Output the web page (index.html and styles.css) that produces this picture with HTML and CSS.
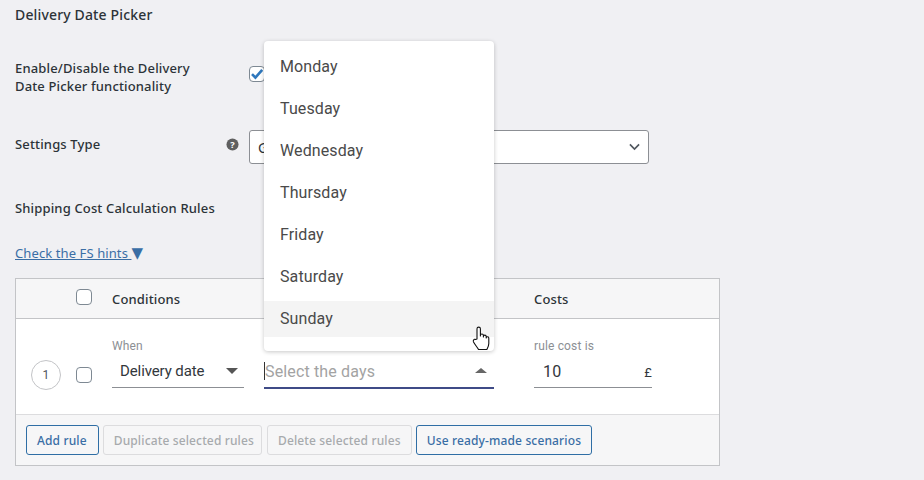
FILE: index.html
```html
<!DOCTYPE html>
<html lang="en">
<head>
<meta charset="utf-8">
<title>Delivery Date Picker</title>
<link rel="stylesheet" href="styles.css">
</head>
<body>
<main class="page">
  <h2 class="title">Delivery Date Picker</h2>
  <div class="field field-enable">
    <label class="field-label">Enable/Disable the Delivery Date Picker functionality</label>
    <span class="help-slot"></span>
    <span class="check check-on">
      <svg viewBox="0 0 16 16" width="16" height="16"><path d="M3 8.200l3.400 3.400L13.200 3.800" fill="none" stroke="#2f78bd" stroke-width="2.600"/></svg>
    </span>
  </div>
  <div class="field field-type">
    <label class="field-label">Settings Type</label>
    <span class="help-slot">
      <svg viewBox="0 0 14 14" width="13" height="13"><circle cx="7" cy="7" r="6.500" fill="#5f5f5f"/><text x="7" y="10.400" class="help-q">?</text></svg>
    </span>
    <div class="select-box">
      <span class="select-text">General</span>
      <svg viewBox="0 0 12 8" width="11" height="8"><path d="M1 1.200l5 5 5-5" fill="none" stroke="#50575e" stroke-width="1.800"/></svg>
    </div>
  </div>
  <h3 class="subtitle">Shipping Cost Calculation Rules</h3>
  <a class="hints" href="#">Check the FS hints <span class="hints-arrow">▼</span></a>
  <section class="rules">
    <div class="grid head">
      <span></span>
      <span class="check"></span>
      <span class="head-cell">Conditions</span>
      <span class="head-cell">Costs</span>
    </div>
    <div class="grid row">
      <span class="num">1</span>
      <span class="check"></span>
      <div class="ctrl">
        <span class="ctrl-label">When</span>
        <div class="ctrl-box">
          <span class="ctrl-value indent">Delivery date</span>
          <span class="tri tri-down"></span>
        </div>
      </div>
      <div class="ctrl ctrl-active">
        <div class="ctrl-box">
          <span class="caret"></span><span class="placeholder">Select the days</span>
          <span class="tri tri-up"></span>
        </div>
        <ul class="menu">
          <li>Monday</li>
          <li>Tuesday</li>
          <li>Wednesday</li>
          <li>Thursday</li>
          <li>Friday</li>
          <li>Saturday</li>
          <li class="hover">Sunday</li>
        </ul>
        <svg class="cursor" viewBox="0 0 18 25" width="18" height="25">
          <path d="M5 13V2.800a1.700 1.700 0 0 1 3.400 0V10V9.500a1.500 1.500 0 0 1 3 0V11V10.500a1.400 1.400 0 0 1 2.800 0V12a1.300 1.300 0 0 1 2.600 .2v5.300c0 2.500-1 4-2 6H6.500C5.500 21.500 3.500 19.500 1.500 16c-.8-1.500 .8-3.500 2-2.500z" fill="#fff" stroke="#111" stroke-width="1.100" stroke-linejoin="round"/>
        </svg>
      </div>
      <div class="ctrl ctrl-cost">
        <span class="ctrl-label">rule cost is</span>
        <div class="ctrl-box">
          <span class="ctrl-value cost-value">10</span>
          <span class="currency">£</span>
        </div>
      </div>
    </div>
    <div class="foot">
      <button class="btn btn-add">Add rule</button>
      <button class="btn btn-off">Duplicate selected rules</button>
      <button class="btn btn-off btn-del">Delete selected rules</button>
      <button class="btn">Use ready-made scenarios</button>
    </div>
  </section>
</main>
</body>
</html>
```
FILE: styles.css
```css
* { box-sizing: border-box; }
html, body { margin: 0; height: 480px; overflow: hidden; }
body { background: #f0f0f3; color: #2c3338; font-family: "Noto Sans", "Open Sans", sans-serif; font-size: 13px; letter-spacing: .15px; }
.page { padding: 5px 0 0 15px; width: 924px; }
.title { margin: 0; font-size: 14px; font-weight: 500; line-height: 20px; }
.field { display: flex; align-items: flex-start; }
.field-label { width: 202px; font-weight: 500; line-height: 18px; padding-right: 10px; }
.help-slot { width: 32px; display: flex; padding-left: 9px; }
.field-enable { margin-top: 34px; height: 36px; }
.field-enable .check { margin-top: 7px; }
.field-type { margin-top: 35px; height: 34px; }
.field-type .field-label { margin-top: 5px; }
.field-type .help-slot { margin-top: 8px; }
.help-q { fill: #fff; font: 700 10px "Noto Sans", sans-serif; text-anchor: middle; }
.check { display: block; width: 16px; height: 16px; border: 1px solid #7e8993; border-radius: 4px; background: #fff; }
.check-on svg { display: block; margin: -1px; }
.select-box { width: 400px; height: 34px; background: #fff; border: 1px solid #8c8f94; border-radius: 3px; display: flex; align-items: center; justify-content: space-between; padding: 0 8px; font-size: 14px; }
.select-text { color: #2c3338; }
.subtitle { margin: 34px 0 0; font-size: 13px; font-weight: 500; line-height: 20px; }
.hints { display: block; margin-top: 25px; line-height: 20px; font-size: 13px; letter-spacing: .1px; color: #3a6ea5; text-decoration: underline; }
.hints-arrow { font: 15px/20px "DejaVu Sans", sans-serif; display: inline-block; }
.rules { margin-top: 15px; width: 705px; height: 188px; border: 1px solid #c3c4c7; background: #fff; display: flex; flex-direction: column; }
.grid { display: grid; grid-template-columns: 25px 16px 132px 250px 118px; column-gap: 20px; padding-left: 15px; }
.head { height: 40px; background: #f6f6f7; border-bottom: 1px solid #c3c4c7; align-items: center; grid-template-columns: 25px 16px 402px 118px; }
.head .check { margin-top: -3px; }
.head-cell { font-weight: 500; line-height: 20px; }
.row { height: 96px; align-items: start; border-bottom: 1px solid #dcdcde; }
.num { width: 30px; height: 30px; margin-top: 41px; border: 1px solid #c3c4c7; border-radius: 50%; display: flex; align-items: center; justify-content: center; font: 12px Roboto, sans-serif; color: #50575e; }
.row > .check { margin-top: 48px; }
.ctrl { position: relative; padding-top: 20px; }
.ctrl-label { display: block; height: 14px; font: 12px/14px Roboto, sans-serif; color: #8c8f94; }
.ctrl-box { height: 35px; border-bottom: 1px solid #8c8f94; display: flex; align-items: center; font: 15px Roboto, sans-serif; position: relative; padding-top: 2px; }
.indent { padding-left: 8px; letter-spacing: -.1px; }
.ctrl-value { color: #32373c; }
.tri { position: absolute; width: 0; height: 0; border-left: 6px solid transparent; border-right: 6px solid transparent; }
.tri-down { border-top: 6px solid #555; right: 6px; top: 15px; }
.tri-up { border-bottom: 5px solid #666; right: 7px; top: 15px; }
.ctrl-active { padding-top: 34px; width: 230px; }
.ctrl-active .ctrl-box { height: 36px; border-bottom: 2px solid #3f4b87; }
.caret { width: 1px; height: 18px; background: #333; }
.placeholder { color: #a3a3a3; font-size: 16px; letter-spacing: .15px; }
.menu { position: absolute; left: 0; top: -278px; width: 230px; height: 310px; margin: 0; padding: 8px 0 0; list-style: none; background: #fff; border-radius: 4px; box-shadow: 0 1px 4px rgba(0,0,0,.22); font: 16px/36px Roboto, sans-serif; color: #4a4a4a; z-index: 5; letter-spacing: .1px; }
.menu li { height: 36px; margin-bottom: 6px; padding-left: 16px; }
.menu .hover { background: #f4f4f4; }
.cursor { position: absolute; left: 208px; top: 7px; z-index: 6; }
.cost-value { font-size: 16px; padding-left: 9px; }
.currency { position: absolute; right: 0; top: 12px; font: 13px Roboto, sans-serif; color: #32373c; }
.foot { flex: 1; background: #f6f6f7; display: flex; align-items: flex-start; gap: 4px; padding: 10px 0 0 10px; }
.btn { height: 30px; padding: 0 10px; border: 1px solid #2f6ea5; border-radius: 3px; background: #f6f6f7; color: #3a6ea5; font: 500 12px "Noto Sans", sans-serif; letter-spacing: .14px; }
.btn-add { padding: 0 11px 0 10px; }
.btn-off { border-color: #dcdcde; color: #a7aaad; padding: 0 7px 0 10px; }
.btn-del { margin-left: 1px; padding: 0 10px; }
```
